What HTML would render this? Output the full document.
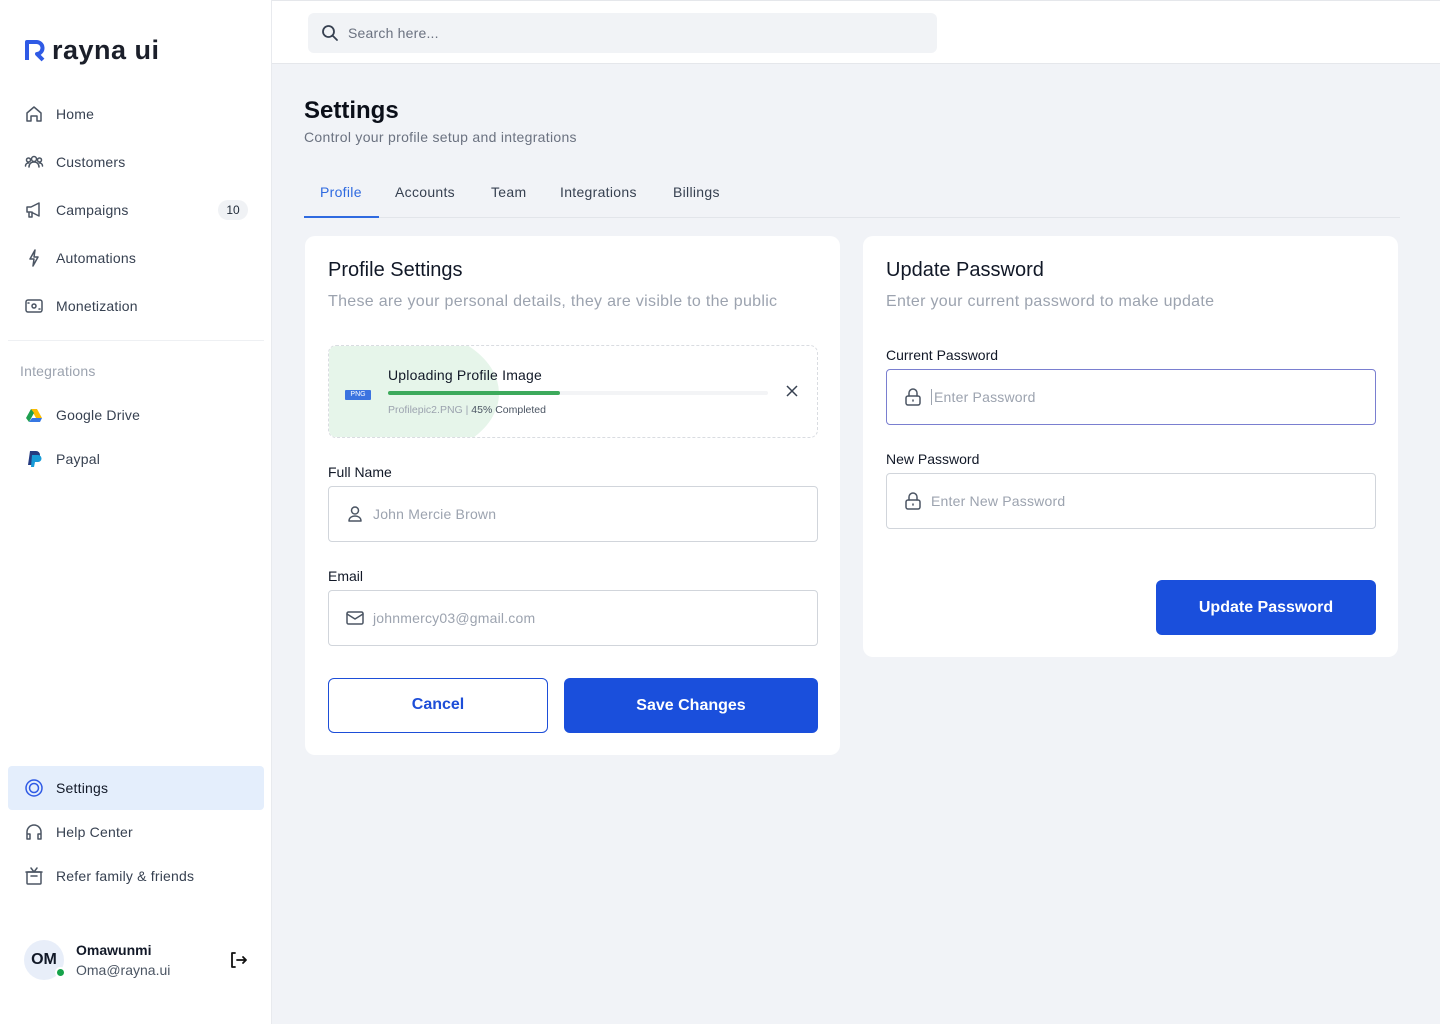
<!DOCTYPE html>
<html><head><meta charset="utf-8"><style>
*{box-sizing:border-box;margin:0;padding:0}
body{width:1440px;height:1024px;font-family:"Liberation Sans",sans-serif;background:#f1f3f7;position:relative;overflow:hidden;color:#1f2937}
.abs{position:absolute}
.side{left:0;top:0;width:272px;height:1024px;background:#fff;border-right:1px solid #e8eaee}
.nav{position:absolute;left:24px;display:flex;align-items:center;font-size:14px;color:#374151;letter-spacing:0.2px}
.nav svg{width:20px;height:20px;margin-right:12px;fill:none;stroke:#4b5563;stroke-width:1.5;stroke-linecap:round;stroke-linejoin:round}
.header{left:272px;top:0;width:1168px;height:64px;background:#fff;border-bottom:1px solid #e5e7eb;border-top:1px solid #e5e7eb}
.card{background:#fff;border-radius:10px}
.lbl{font-size:14px;color:#111827}
.inp{border:1px solid #d1d5db;border-radius:4px;height:56px;display:flex;align-items:center;padding-left:16px;font-size:14px;color:#9ca3af;letter-spacing:0.2px}
.inp svg{width:20px;height:20px;margin-right:8px;fill:none;stroke:#4b5563;stroke-width:1.5;stroke-linecap:round;stroke-linejoin:round}
.h2{font-size:20px;color:#111827;font-weight:500}
.sub{font-size:16px;color:#9ca3af;letter-spacing:0.3px}
.tab{position:absolute;top:184px;font-size:14px;color:#374151;letter-spacing:0.3px}
</style></head><body>
<div class="abs side">
  <div class="abs" style="left:24px;top:36px;display:flex;align-items:center">
    <svg width="22" height="24" viewBox="0 0 22 24"><path d="M3 22V4h9a6 6 0 0 1 1 12l6 6" fill="none" stroke="#2f5ae5" stroke-width="4" stroke-linejoin="round"/></svg>
    <span style="font-size:27px;color:#1b1f2a;margin-left:6px;letter-spacing:0.5px;line-height:28px;font-weight:bold;-webkit-text-stroke:0px">rayna ui</span>
  </div>
  <div class="nav" style="top:104px"><svg viewBox="0 0 20 20"><path d="M3 9l7-6 7 6v8h-4v-5H7v5H3z"/></svg>Home</div>
  <div class="nav" style="top:152px"><svg viewBox="0 0 20 20"><circle cx="10" cy="7" r="2.5"/><circle cx="4.5" cy="8" r="2"/><circle cx="15.5" cy="8" r="2"/><path d="M5 15c0-3 2-5 5-5s5 2 5 5M1.5 14c0-2 1.3-3 3-3M18.5 14c0-2-1.3-3-3-3"/></svg>Customers</div>
  <div class="nav" style="top:200px"><svg viewBox="0 0 20 20"><path d="M3 7h4l8-4v13l-8-4H3zM5 12v5h3v-5"/></svg>Campaigns</div>
  <div class="abs" style="left:218px;top:200px;width:30px;height:20px;border-radius:10px;background:#f0f2f5;font-size:12px;text-align:center;line-height:20px;color:#1f2937">10</div>
  <div class="nav" style="top:248px"><svg viewBox="0 0 20 20"><path d="M11 2L6 11h4l-1 7 5-9h-4z"/></svg>Automations</div>
  <div class="nav" style="top:296px"><svg viewBox="0 0 20 20"><rect x="2" y="4" width="16" height="12" rx="2"/><circle cx="10" cy="10" r="2"/><path d="M4 7h1M15 13h1"/></svg>Monetization</div>
  <div class="abs" style="left:8px;top:340px;width:256px;border-top:1px solid #eef0f3"></div>
  <div class="abs" style="left:20px;top:363px;font-size:14px;color:#9ca3af;letter-spacing:0.2px">Integrations</div>
  <div class="nav" style="top:405px"><svg viewBox="0 0 20 20" style="stroke:none"><path d="M7 4h6l5 9h-6z" fill="#fbbc04"/><path d="M7 4l-5 9 3 4 5-9z" fill="#1e9f4f"/><path d="M5 17h11l2-4H8z" fill="#3777e3"/></svg>Google Drive</div>
  <div class="nav" style="top:449px"><svg viewBox="0 0 20 20" style="stroke:none"><path d="M6 2h6a4 4 0 0 1 0 8H9l-1 6H4z" fill="#253b80"/><path d="M8 6h6a3.5 3.5 0 0 1 0 7h-3l-1 5H7z" fill="#179bd7"/></svg>Paypal</div>
  <div class="abs" style="left:8px;top:766px;width:256px;height:44px;background:#e4eefc;border-radius:4px"></div>
  <div class="nav" style="top:778px;color:#111827"><svg viewBox="0 0 20 20" style="stroke:#2f5ae5"><circle cx="10" cy="10" r="8"/><circle cx="10" cy="10" r="4.5"/></svg>Settings</div>
  <div class="nav" style="top:822px"><svg viewBox="0 0 20 20"><path d="M3 14v-4a7 7 0 0 1 14 0v4M3 12h3v5H3zM14 12h3v5h-3z"/></svg>Help Center</div>
  <div class="nav" style="top:866px"><svg viewBox="0 0 20 20"><rect x="3" y="6" width="14" height="12" rx="1"/><path d="M2 6h16M7 10h6M7 2l3 4 3-4"/></svg>Refer family &amp; friends</div>
  <div class="abs" style="left:24px;top:940px;width:40px;height:40px;border-radius:50%;background:#e8eef9;font-size:16px;font-weight:bold;text-align:center;line-height:40px;color:#111827">OM</div>
  <div class="abs" style="left:55px;top:967px;width:11px;height:11px;border-radius:50%;background:#16a34a;border:2px solid #fff"></div>
  <div class="abs" style="left:76px;top:942px;font-size:14px;font-weight:bold;color:#111827">Omawunmi</div>
  <div class="abs" style="left:76px;top:962px;font-size:14px;color:#4b5563">Oma@rayna.ui</div>
  <svg class="abs" style="left:228px;top:950px" width="20" height="20" viewBox="0 0 20 20" fill="none" stroke="#111" stroke-width="1.8" stroke-linecap="round" stroke-linejoin="round"><path d="M7 3H4v14h3M9 10h9M15 7l3 3-3 3"/></svg>
</div>
<div class="abs header">
  <div class="abs" style="left:36px;top:12px;width:629px;height:40px;background:#f1f3f6;border-radius:6px;display:flex;align-items:center;padding-left:12px;font-size:14px;color:#6b7280">
    <svg width="20" height="20" viewBox="0 0 20 20" fill="none" stroke="#374151" stroke-width="1.8" stroke-linecap="round"><circle cx="8.5" cy="8.5" r="5.5"/><path d="M13 13l4 4"/></svg>
    <span style="margin-left:8px;letter-spacing:0.2px">Search here...</span></div>
</div>
<div class="abs" style="left:304px;top:97px;font-size:24px;font-weight:bold;color:#0b0f19">Settings</div>
<div class="abs" style="left:304px;top:129px;font-size:14px;color:#6b7280;letter-spacing:0.3px">Control your profile setup and integrations</div>
<div class="tab" style="left:320px;color:#2f6ae0">Profile</div>
<div class="tab" style="left:395px">Accounts</div>
<div class="tab" style="left:491px">Team</div>
<div class="tab" style="left:560px">Integrations</div>
<div class="tab" style="left:673px">Billings</div>
<div class="abs" style="left:304px;top:217px;width:1096px;border-top:1px solid #e2e5ea"></div>
<div class="abs" style="left:304px;top:216px;width:75px;height:2px;background:#2f6ae0"></div>

<div class="abs card" style="left:305px;top:236px;width:535px;height:519px">
  <div class="abs h2" style="left:23px;top:23px">Profile Settings</div>
  <div class="abs sub" style="left:23px;top:57px">These are your personal details, they are visible to the public</div>
  <div class="abs" style="left:23px;top:109px;width:490px;height:93px;border:1px dashed #d9dce1;border-radius:8px;overflow:hidden">
    <div class="abs" style="left:-40px;top:-20px;width:210px;height:135px;border-radius:0 50% 50% 0/0 50% 50% 0;background:#e6f5ea"></div>
    <div class="abs" style="left:16px;top:44px;width:26px;height:10px;background:#3b73e0;color:#fff;font-size:7px;text-align:center;line-height:10px;border-radius:1px">PNG</div>
    <div class="abs" style="left:59px;top:21px;font-size:14px;color:#111827;letter-spacing:0.2px">Uploading Profile Image</div>
    <div class="abs" style="left:59px;top:45px;width:380px;height:4px;background:#f3f4f6;border-radius:2px"></div>
    <div class="abs" style="left:59px;top:45px;width:172px;height:4px;background:#3daa5c;border-radius:2px"></div>
    <div class="abs" style="left:59px;top:58px;font-size:10.5px;color:#9ca3af">Profilepic2.PNG <span style="color:#9ca3af">|</span> <span style="color:#4b5563">45% Completed</span></div>
    <svg class="abs" style="left:456px;top:38px" width="14" height="14" viewBox="0 0 14 14" stroke="#374151" stroke-width="1.5"><path d="M2 2l10 10M12 2L2 12"/></svg>
  </div>
  <div class="abs lbl" style="left:23px;top:228px">Full Name</div>
  <div class="abs inp" style="left:23px;top:250px;width:490px"><svg viewBox="0 0 20 20"><circle cx="10" cy="6.5" r="3.5"/><path d="M4 17c0-3.5 3-5 6-5s6 1.5 6 5z"/></svg>John Mercie Brown</div>
  <div class="abs lbl" style="left:23px;top:332px">Email</div>
  <div class="abs inp" style="left:23px;top:354px;width:490px"><svg viewBox="0 0 20 20"><rect x="2" y="4" width="16" height="12" rx="1.5"/><path d="M2 6l8 5 8-5"/></svg>johnmercy03@gmail.com</div>
  <div class="abs" style="left:23px;top:442px;width:220px;height:55px;border:1.5px solid #1d4ed8;border-radius:6px;text-align:center;line-height:52px;font-size:16px;color:#1d4ed8;font-weight:bold">Cancel</div>
  <div class="abs" style="left:259px;top:442px;width:254px;height:55px;background:#1a4fdc;border-radius:6px;text-align:center;line-height:55px;font-size:16px;color:#fff;font-weight:bold">Save Changes</div>
</div>

<div class="abs card" style="left:863px;top:236px;width:535px;height:421px">
  <div class="abs h2" style="left:23px;top:23px">Update Password</div>
  <div class="abs sub" style="left:23px;top:57px">Enter your current password to make update</div>
  <div class="abs lbl" style="left:23px;top:111px">Current Password</div>
  <div class="abs inp" style="left:23px;top:133px;width:490px;border-color:#7a7fd0"><svg viewBox="0 0 20 20"><rect x="3" y="9" width="14" height="9" rx="2"/><path d="M6 9V6a4 4 0 0 1 8 0v3M10 13v1"/></svg><span style="border-left:1px solid #9ca3af;padding-left:2px">Enter Password</span></div>
  <div class="abs lbl" style="left:23px;top:215px">New Password</div>
  <div class="abs inp" style="left:23px;top:237px;width:490px"><svg viewBox="0 0 20 20"><rect x="3" y="9" width="14" height="9" rx="2"/><path d="M6 9V6a4 4 0 0 1 8 0v3M10 13v1"/></svg>Enter New Password</div>
  <div class="abs" style="left:293px;top:344px;width:220px;height:55px;background:#1a4fdc;border-radius:6px;text-align:center;line-height:55px;font-size:16px;color:#fff;font-weight:bold">Update Password</div>
</div>
</body></html>
